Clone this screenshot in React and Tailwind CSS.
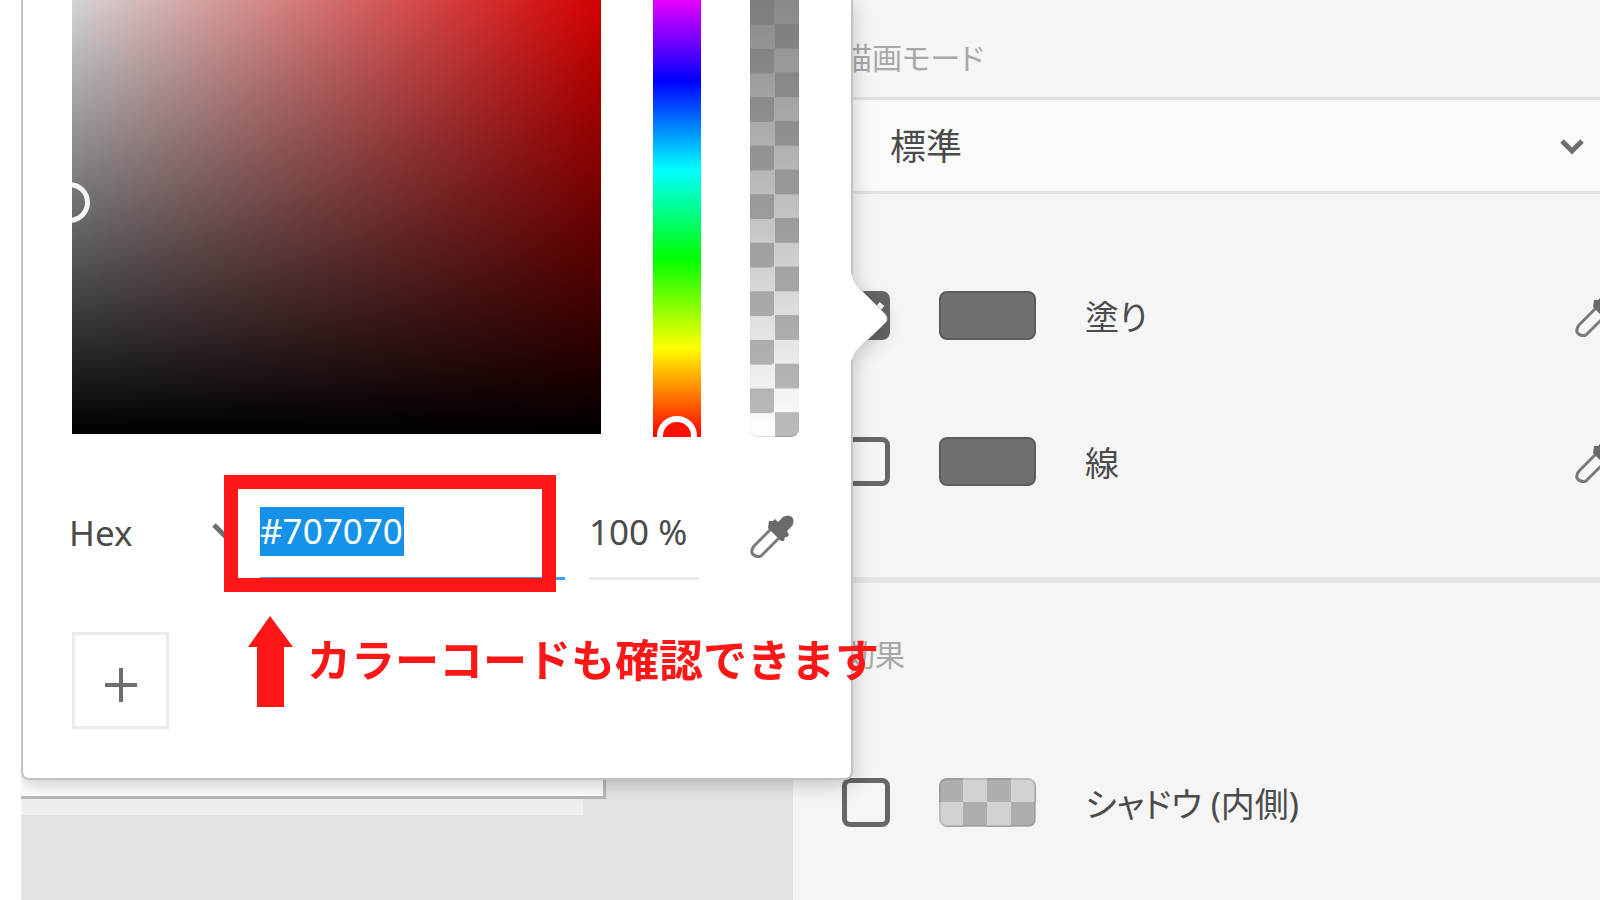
import { useState } from 'react';

function ChevronIcon({ className }) {
    return (
        <svg viewBox="0 0 24 16" className={className} fill="none" stroke="#6e6e6e" strokeWidth="5" aria-hidden="true">
            <path d="M2 2 L12 12 L22 2" />
        </svg>
    );
}

function EyedropperIcon() {
    return (
        <svg viewBox="0 0 44 44" className="w-11 h-11" aria-hidden="true">
            <path d="M21 14 L4 31 Q1 35 2 38 Q5 43 11 41 L29 23" fill="none" stroke="#7a7a7a" strokeWidth="3" strokeLinejoin="round" />
            <path d="M28 7 L33 2 Q38 -1 42 2 Q45 6 42 11 L37 16 L39 20 L37 22 L35 22 L34 26 L31 26 L18 13 L19 6 L23 6 L25 4 Z" fill="#6a6a6a" />
        </svg>
    );
}

const swatches = {
    solid: 'bg-[#707070] border-[#5c5c5c]',
    checker: 'bg-[repeating-conic-gradient(#d2d2d2_0_25%,#aeaeae_0_50%)] bg-[length:48px_48px] bg-origin-border border-black/10',
};

function AppearanceRow({ id, label, swatch, checked, onChange, picker }) {
    return (
        <div className="flex items-center h-[49px] pl-[49px]">
            <div className="relative w-12 h-[49px] shrink-0">
                <input
                    id={id}
                    type="checkbox"
                    checked={checked}
                    onChange={onChange}
                    className="block appearance-none w-12 h-[49px] rounded-lg border-[5px] border-[#666] checked:bg-[#666]"
                />
                {checked && (
                    <svg viewBox="0 0 48 48" className="absolute inset-0 pointer-events-none" fill="none" stroke="#fff" strokeWidth="6" aria-hidden="true">
                        <path d="M10 27 L20 37 L40 13" />
                    </svg>
                )}
            </div>
            <button type="button" aria-label={`${label} カラー`} className={`ml-[49px] w-[97px] h-[49px] shrink-0 rounded-lg border-2 ${swatches[swatch]}`} />
            <label htmlFor={id} className="ml-[49px] pt-1 text-[34px] leading-[49px] text-[#4b4b4b] whitespace-nowrap [font-feature-settings:'palt']">{label}</label>
            {picker && (
                <button type="button" aria-label={`${label} スポイト`} className="ml-auto -mr-[19px] shrink-0">
                    <EyedropperIcon />
                </button>
            )}
        </div>
    );
}

function PropertyPanel() {
    const [enabled, setEnabled] = useState({ fill: true, stroke: false, shadow: false });
    const toggle = key => setEnabled({ ...enabled, [key]: !enabled[key] });

    return (
        <aside className="flex-1 min-w-0 pt-9 pb-[71px] bg-[#f5f5f5]">
            {/* Blend mode */}
            <label htmlFor="blend" className="block pl-[49px] text-[30px] leading-11 text-[#a8a8a8] [font-feature-settings:'palt']">描画モード</label>
            <div className="relative mt-[17px]">
                <select id="blend" className="block appearance-none w-full h-[97px] pt-0.5 pl-[97px] border-y-[3px] border-[#e1e1e1] bg-[#fafafa] text-4xl text-[#4b4b4b]">
                    <option>標準</option>
                </select>
                <ChevronIcon className="absolute right-4 top-[42px] w-6 h-4 pointer-events-none" />
            </div>

            {/* Fill and stroke */}
            <div className="flex flex-col gap-[97px] mt-[97px]">
                <AppearanceRow id="fill" label="塗り" swatch="solid" checked={enabled.fill} onChange={() => toggle('fill')} picker />
                <AppearanceRow id="stroke" label="線" swatch="solid" checked={enabled.stroke} onChange={() => toggle('stroke')} picker />
            </div>

            <hr className="mt-[91px] border-t-[6px] border-[#e4e4e4]" />

            {/* Effects */}
            <h2 className="mt-[50px] mb-[101px] pl-[52px] text-[30px] leading-11 text-[#a8a8a8]">効果</h2>
            <AppearanceRow id="shadow" label="シャドウ (内側)" swatch="checker" checked={enabled.shadow} onChange={() => toggle('shadow')} />
        </aside>
    );
}

function ColorPicker() {
    const [hex, setHex] = useState('#707070');
    const [opacity, setOpacity] = useState('100 %');

    return (
        <div className="absolute left-0 top-0 w-[832px] pl-[49px] pb-[49px] bg-white border-2 border-t-0 border-[#c2c2c2] rounded-b-lg drop-shadow-[0_4px_10px_rgba(0,0,0,0.22)]">
            {/* Arrow pointing at the fill row */}
            <svg viewBox="0 0 40 92" className="absolute left-[827px] top-[270px] w-10 h-[92px]" aria-hidden="true">
                <path d="M0 4 H2 Q4 14 12 21 L35 44 Q39 49 35 53 L11 76 Q4 82 2 90 H0 Z" fill="#fff" />
                <path d="M2 4 Q4 14 12 21 L35 44 Q39 49 35 53 L11 76 Q4 82 2 90" fill="none" stroke="#cdcdcd" strokeWidth="1" />
            </svg>

            <div className="flex items-start">
                <div className="relative w-[529px] h-[434px] overflow-hidden bg-[linear-gradient(to_top,#000,rgba(0,0,0,0.17)),linear-gradient(to_right,#fff,#f00)]">
                    <span className="absolute -left-[23px] top-[182px] w-[41px] h-[41px] rounded-full border-[5px] border-[#f4f4f4]" />
                </div>
                <div className="relative ml-[52px] w-12 h-[437px] overflow-hidden">
                    <input
                        type="range"
                        aria-label="色相"
                        min="0"
                        max="360"
                        defaultValue="0"
                        className="block appearance-none w-12 h-[437px] [writing-mode:vertical-lr] [direction:rtl] [&::-webkit-slider-thumb]:opacity-0 bg-[linear-gradient(to_top,#f00_0px,#ff0_89px,#0f0_178px,#0ff_267px,#00f_356px,#f0f_445px)]"
                    />
                    <span className="absolute left-1 top-[416px] w-10 h-10 rounded-full border-[6px] border-white bg-[#f10] pointer-events-none" />
                </div>
                <input
                    type="range"
                    aria-label="不透明度"
                    min="0"
                    max="100"
                    defaultValue="100"
                    className="block appearance-none ml-[49px] w-[49px] h-[437px] rounded-b-lg [writing-mode:vertical-lr] [direction:rtl] [&::-webkit-slider-thumb]:opacity-0 bg-[linear-gradient(to_top,rgba(112,112,112,0),rgba(112,112,112,0.83)),repeating-conic-gradient(#fff_0_25%,#bbb_0_50%)] bg-[length:100%_100%,100%_11.11%] bg-bottom shadow-[inset_0_-1px_1px_rgba(0,0,0,0.15)]"
                />
            </div>

            {/* Colour value */}
            <div className="flex items-start gap-6 mt-[70px] text-[35px] text-[#4b4b4b]">
                <div className="relative w-[164px]">
                    <select aria-label="カラーモデル" className="block appearance-none w-full h-[49px] -ml-[3px]">
                        <option>Hex</option>
                    </select>
                    <ChevronIcon className="absolute right-0 top-4 w-6 h-4 pointer-events-none" />
                </div>
                <div className="w-[305px] h-[73px] border-b-[3px] border-[#3d9fe6]">
                    <input
                        type="text"
                        aria-label="カラーコード"
                        value={hex}
                        onChange={e => setHex(e.target.value)}
                        className="block w-[144px] h-[49px] bg-[#1692e8] text-white outline-none"
                    />
                </div>
                <input
                    type="text"
                    aria-label="不透明度の値"
                    value={opacity}
                    onChange={e => setOpacity(e.target.value)}
                    className="block w-[110px] h-[73px] pb-[21px] border-b-[3px] border-[#e8e8e8] outline-none"
                />
                <button type="button" aria-label="スポイト" className="ml-[27px] mt-2">
                    <EyedropperIcon />
                </button>
            </div>

            <button type="button" aria-label="スウォッチを追加" className="flex items-center justify-center mt-[52px] w-[97px] h-[97px] border-[3px] border-[#ebebeb]">
                <svg viewBox="0 0 32 34" className="w-8 h-[34px] mt-2" stroke="#6e6e6e" strokeWidth="4" aria-hidden="true">
                    <path d="M0 17 H32 M16 0 V34" />
                </svg>
            </button>
        </div>
    );
}

function Annotation() {
    return (
        <div className="absolute left-[203px] top-[475px] pointer-events-none">
            <div className="w-[332px] h-[117px] border-[14px] border-[#ff1616]" />
            <div className="flex items-start mt-6 ml-6">
                <svg viewBox="0 0 45 91" className="w-[45px] h-[91px]" fill="#ff1616" aria-hidden="true">
                    <path d="M22 0 L45 31 H36 V91 H9 V31 H0 Z" />
                </svg>
                <p className="ml-[14px] mt-2 text-[44px] leading-[72px] font-bold text-[#ff1616] whitespace-nowrap">カラーコードも確認できます</p>
            </div>
        </div>
    );
}

export default function App() {
    return (
        <div className="min-h-screen pl-[21px] bg-white font-['Noto_Sans','Noto_Sans_CJK_JP',sans-serif]">
            <main className="relative flex min-h-screen overflow-hidden">
                {/* Canvas with the artboard */}
                <div className="w-[772px] shrink-0 bg-[#e4e4e4]">
                    <div className="w-[585px] h-[799px] bg-white border-r-[3px] border-b-[3px] border-[#b9b9b9]" />
                    <div className="w-[562px] h-4 bg-[#efefef]" />
                </div>
                <PropertyPanel />
                <ColorPicker />
                <Annotation />
            </main>
        </div>
    );
}
